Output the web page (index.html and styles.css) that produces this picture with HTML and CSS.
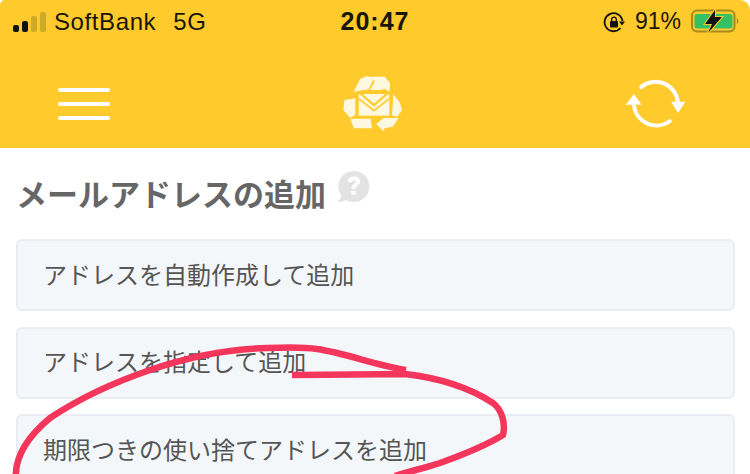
FILE: index.html
```html
<!DOCTYPE html>
<html lang="ja">
<head>
  <meta charset="UTF-8">
  <meta name="viewport" content="width=device-width, initial-scale=1.0">
  <title>メールアドレスの追加</title>
  <link rel="stylesheet" href="styles.css">
</head>
<body>
  <div class="screen">
    <header class="topbar">
      <div class="status">
        <div class="status-left">
          <span class="signal"><i class="on s1"></i><i class="on s2"></i><i class="s3"></i><i class="s4"></i></span>
          <span>SoftBank</span>
          <span class="network">5G</span>
        </div>
        <div class="status-time">20:47</div>
        <div class="status-right">
          <svg class="lock" width="22" height="22" viewBox="0 0 22 22">
            <path d="M19.500 10A9 9 0 1 0 17.500 17" fill="none" stroke="#111" stroke-width="1.800"/>
            <path d="M16 10.500h6l-3 4z" fill="#111"/>
            <rect x="7" y="10" width="8" height="6.500" rx="1" fill="#111"/>
            <path d="M8.700 10.500V8.500a2.300 2.300 0 0 1 4.600 0v2" fill="none" stroke="#111" stroke-width="1.300"/>
          </svg>
          <span>91%</span>
          <svg class="battery" width="48" height="28" viewBox="0 0 48 28">
            <rect x="1" y="2.500" width="42.500" height="21" rx="5" fill="none" stroke="#a58a1e" stroke-width="2"/>
            <rect x="3.500" y="6" width="38" height="14.500" rx="2.500" fill="#35c163"/>
            <path d="M45.800 10c2 .5 2 5.500 0 6z" fill="#a58a1e"/>
            <path d="M24 2 14 16h7l-4 9 14-16h-7z" fill="#111" stroke="#ffca2c" stroke-width="2" paint-order="stroke"/>
          </svg>
        </div>
      </div>
      <nav class="toolbar">
        <div class="menu-icon"><span></span><span></span><span></span></div>
        <svg class="logo" width="62" height="60" viewBox="130 222 186 180">
          <g fill="#fff8e1">
            <path d="M165 275 185 236 205 228 226 234 210 268z"/>
            <path d="M218 230H258L275 250 272 275 258 266 245 270H214L228 245z"/>
            <path d="M284 283 304 308 310 330 296 350 279 346 282 318z"/>
            <path d="M255 394 232 372 255 354H300L282 380 258 385z"/>
            <path d="M155 358 170 356 216 356 220 385H166z"/>
            <path d="M170 295 137 300 134 330 155 354 170 344z"/>
            <path d="M180 283H272V347H180z"/>
          </g>
          <path d="M180 280H272L226 320z" fill="#ffca2c"/>
          <path d="M192 282H260L226 311z" fill="#fff8e1"/>
          <path d="M180 296 226 332 272 296" fill="none" stroke="#ffca2c" stroke-width="5"/>
        </svg>
        <svg class="sync" width="63" height="52" viewBox="105 235 190 157">
          <path d="M157 262A68 68 0 0 1 268 310" fill="none" stroke="#fff" stroke-width="12" stroke-linecap="round"/>
          <path d="M243 365A68 68 0 0 1 135 318" fill="none" stroke="#fff" stroke-width="12" stroke-linecap="round"/>
          <path d="M247 307H290L268 341z" fill="#fff"/>
          <path d="M110 316H158L135 283z" fill="#fff"/>
        </svg>
      </nav>
    </header>

    <main class="content">
      <h1 class="title">メールアドレスの追加
        <svg class="help" width="34" height="34" viewBox="0 0 36 36">
          <path d="M19 2a16.500 16.500 0 1 1-8.500 30.700C8 34.500 4.500 35 1 34.500c2.500-1.500 4-3.800 4.500-6.500A16.500 16.500 0 0 1 19 2z" fill="#e3e3e3"/>
          <path d="M12.500 13.500c.3-3.800 3-5.500 6.500-5.500s6.500 2 6.500 5.200c0 4.300-4.800 4-4.800 7.800h-4.400c0-5.300 4.600-5 4.600-7.500 0-1-.8-1.700-1.900-1.700-1.200 0-2 .8-2.200 2.100z" fill="#fff"/>
          <rect x="16.300" y="23" width="4.400" height="4.200" fill="#fff"/>
        </svg>
      </h1>
      <div class="item">アドレスを自動作成して追加</div>
      <div class="item">アドレスを指定して追加</div>
      <div class="item">期限つきの使い捨てアドレスを追加</div>
    </main>

    <!-- 手書きの赤い丸 -->
    <svg class="scribble" width="750" height="474" viewBox="0 0 750 474">
      <path d="M16 480C14 458 26 438 50 418C80 398 115 382 150 370C185 358 225 349 267 348C290 347 305 347 317 349C345 353 375 365 406 370"/>
      <path d="M292 375C330 375 370 374 405 374C440 378 470 388 493 403C501 409 506 422 503 435C485 446 465 454 440 463C425 468 410 471 395 476"/>
    </svg>
  </div>
</body>
</html>
```

FILE: styles.css
```css
* {
  box-sizing: border-box;
}

html, body {
  margin: 0;
  height: 100%;
  overflow: hidden;
  background: #fff;
}

body {
  font-family: "Liberation Sans", "Noto Sans CJK JP", sans-serif;
}

.screen {
  position: relative;
  width: 750px;
  height: 474px;
  overflow: hidden;
}

.topbar {
  height: 148px;
  background: #ffca2c;
  border-radius: 5px 10px 0 0;
}

.status {
  height: 44px;
  padding: 0 11px 1px;
  display: grid;
  grid-template-columns: 1fr auto 1fr;
  align-items: center;
  color: #1a1608;
  font-size: 24px;
}

.status-left {
  display: flex;
  align-items: center;
  gap: 8px;
  letter-spacing: 0.6px;
}

.network {
  margin-left: 9px;
}

.signal {
  display: flex;
  align-items: flex-end;
  gap: 3px;
  height: 20px;
  margin: 0 0 0 2px;
}

.signal i {
  display: block;
  width: 6px;
  border-radius: 2px;
  background: #cfa928;
}

.signal .on {
  background: #111;
}

.s1 { height: 7px; }
.s2 { height: 11px; }
.s3 { height: 16px; }
.s4 { height: 20px; }

.status-time {
  font-weight: bold;
  font-size: 25px;
  letter-spacing: 1px;
}

.status-right {
  display: flex;
  align-items: center;
  justify-content: flex-end;
  gap: 10px;
  font-size: 23px;
}

.toolbar {
  height: 104px;
  padding: 16px 63px 0 58px;
  display: flex;
  align-items: center;
  justify-content: space-between;
}

.menu-icon {
  width: 52px;
  display: flex;
  flex-direction: column;
  gap: 10px;
}

.menu-icon span {
  height: 4px;
  border-radius: 2px;
  background: #fff;
}

.logo {
  margin-left: 11px;
}

.content {
  padding: 24px 15px 0 16px;
}

.title {
  margin: 0 0 27px;
  height: 40px;
  display: flex;
  align-items: center;
  color: #666;
  font-size: 31px;
  font-weight: bold;
}

.help {
  margin: -12px 0 0 10px;
}

.item {
  height: 72px;
  margin-bottom: 15.500px;
  padding: 0 0 4px 25px;
  display: flex;
  align-items: center;
  color: #555;
  font-size: 24px;
  background: #f4f7fa;
  border: 2px solid #e9edf2;
  border-radius: 6px;
}

.scribble {
  position: absolute;
  top: 0;
  left: 0;
  fill: none;
  stroke: #f5365c;
  stroke-width: 6.500;
  stroke-linejoin: round;
}
```
